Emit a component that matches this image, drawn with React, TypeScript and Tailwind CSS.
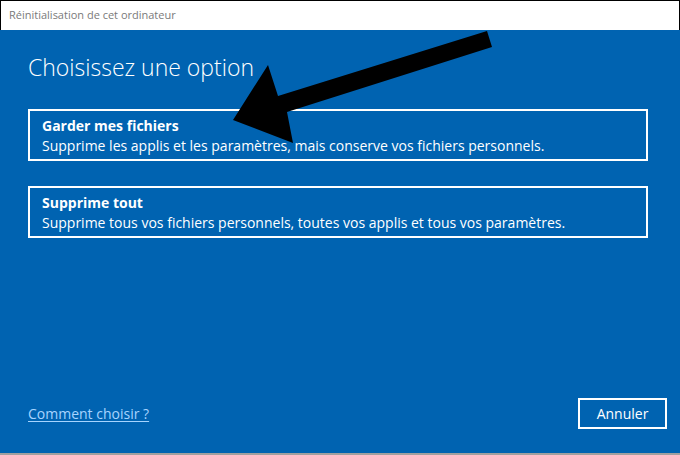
import React from "react";

const options = [
  {
    titre: "Garder mes fichiers",
    description: "Supprime les applis et les paramètres, mais conserve vos fichiers personnels.",
  },
  {
    titre: "Supprime tout",
    description: "Supprime tous vos fichiers personnels, toutes vos applis et tous vos paramètres.",
  },
];

export default function App() {
  return (
    <div className="relative w-[680px] h-[455px] flex flex-col font-['Open_Sans',sans-serif] overflow-hidden">
      <div className="h-[30px] bg-white border-t border-x border-black flex items-center pl-[8px] text-[11px] text-[#7a7a7a]">
        Réinitialisation de cet ordinateur
      </div>
      <main className="flex-1 bg-[#0063b1] border-b-2 border-[#a0a0a0] flex flex-col px-[28px] text-white">
        <h1 className="mt-[20px] text-[23px] font-light leading-[34px]">Choisissez une option</h1>
        <div className="mt-[25px] flex flex-col gap-[25px] w-[620px]">
          {options.map((option) => (
            <button
              key={option.titre}
              className="h-[52px] border-2 border-white text-left px-[12px] pt-[5px] flex flex-col"
            >
              <span className="text-[14px] font-bold leading-[20px]">{option.titre}</span>
              <span className="text-[14px] leading-[20px]">{option.description}</span>
            </button>
          ))}
        </div>
        <div className="mt-auto mb-[24px] -mr-[15px] flex items-end justify-between">
          <a href="#" className="text-[14px] text-[#a6d4ff] underline underline-offset-2 mb-[5px]">
            Comment choisir ?
          </a>
          <button className="w-[89px] h-[31px] border-2 border-white text-[14px]">Annuler</button>
        </div>
      </main>
      <svg className="absolute inset-0 pointer-events-none" width="680" height="455" viewBox="0 0 680 455">
        <polygon points="487,31 492,47 287,112 293,143 233,120 268,65 278,96" fill="#000" />
      </svg>
    </div>
  );
}
